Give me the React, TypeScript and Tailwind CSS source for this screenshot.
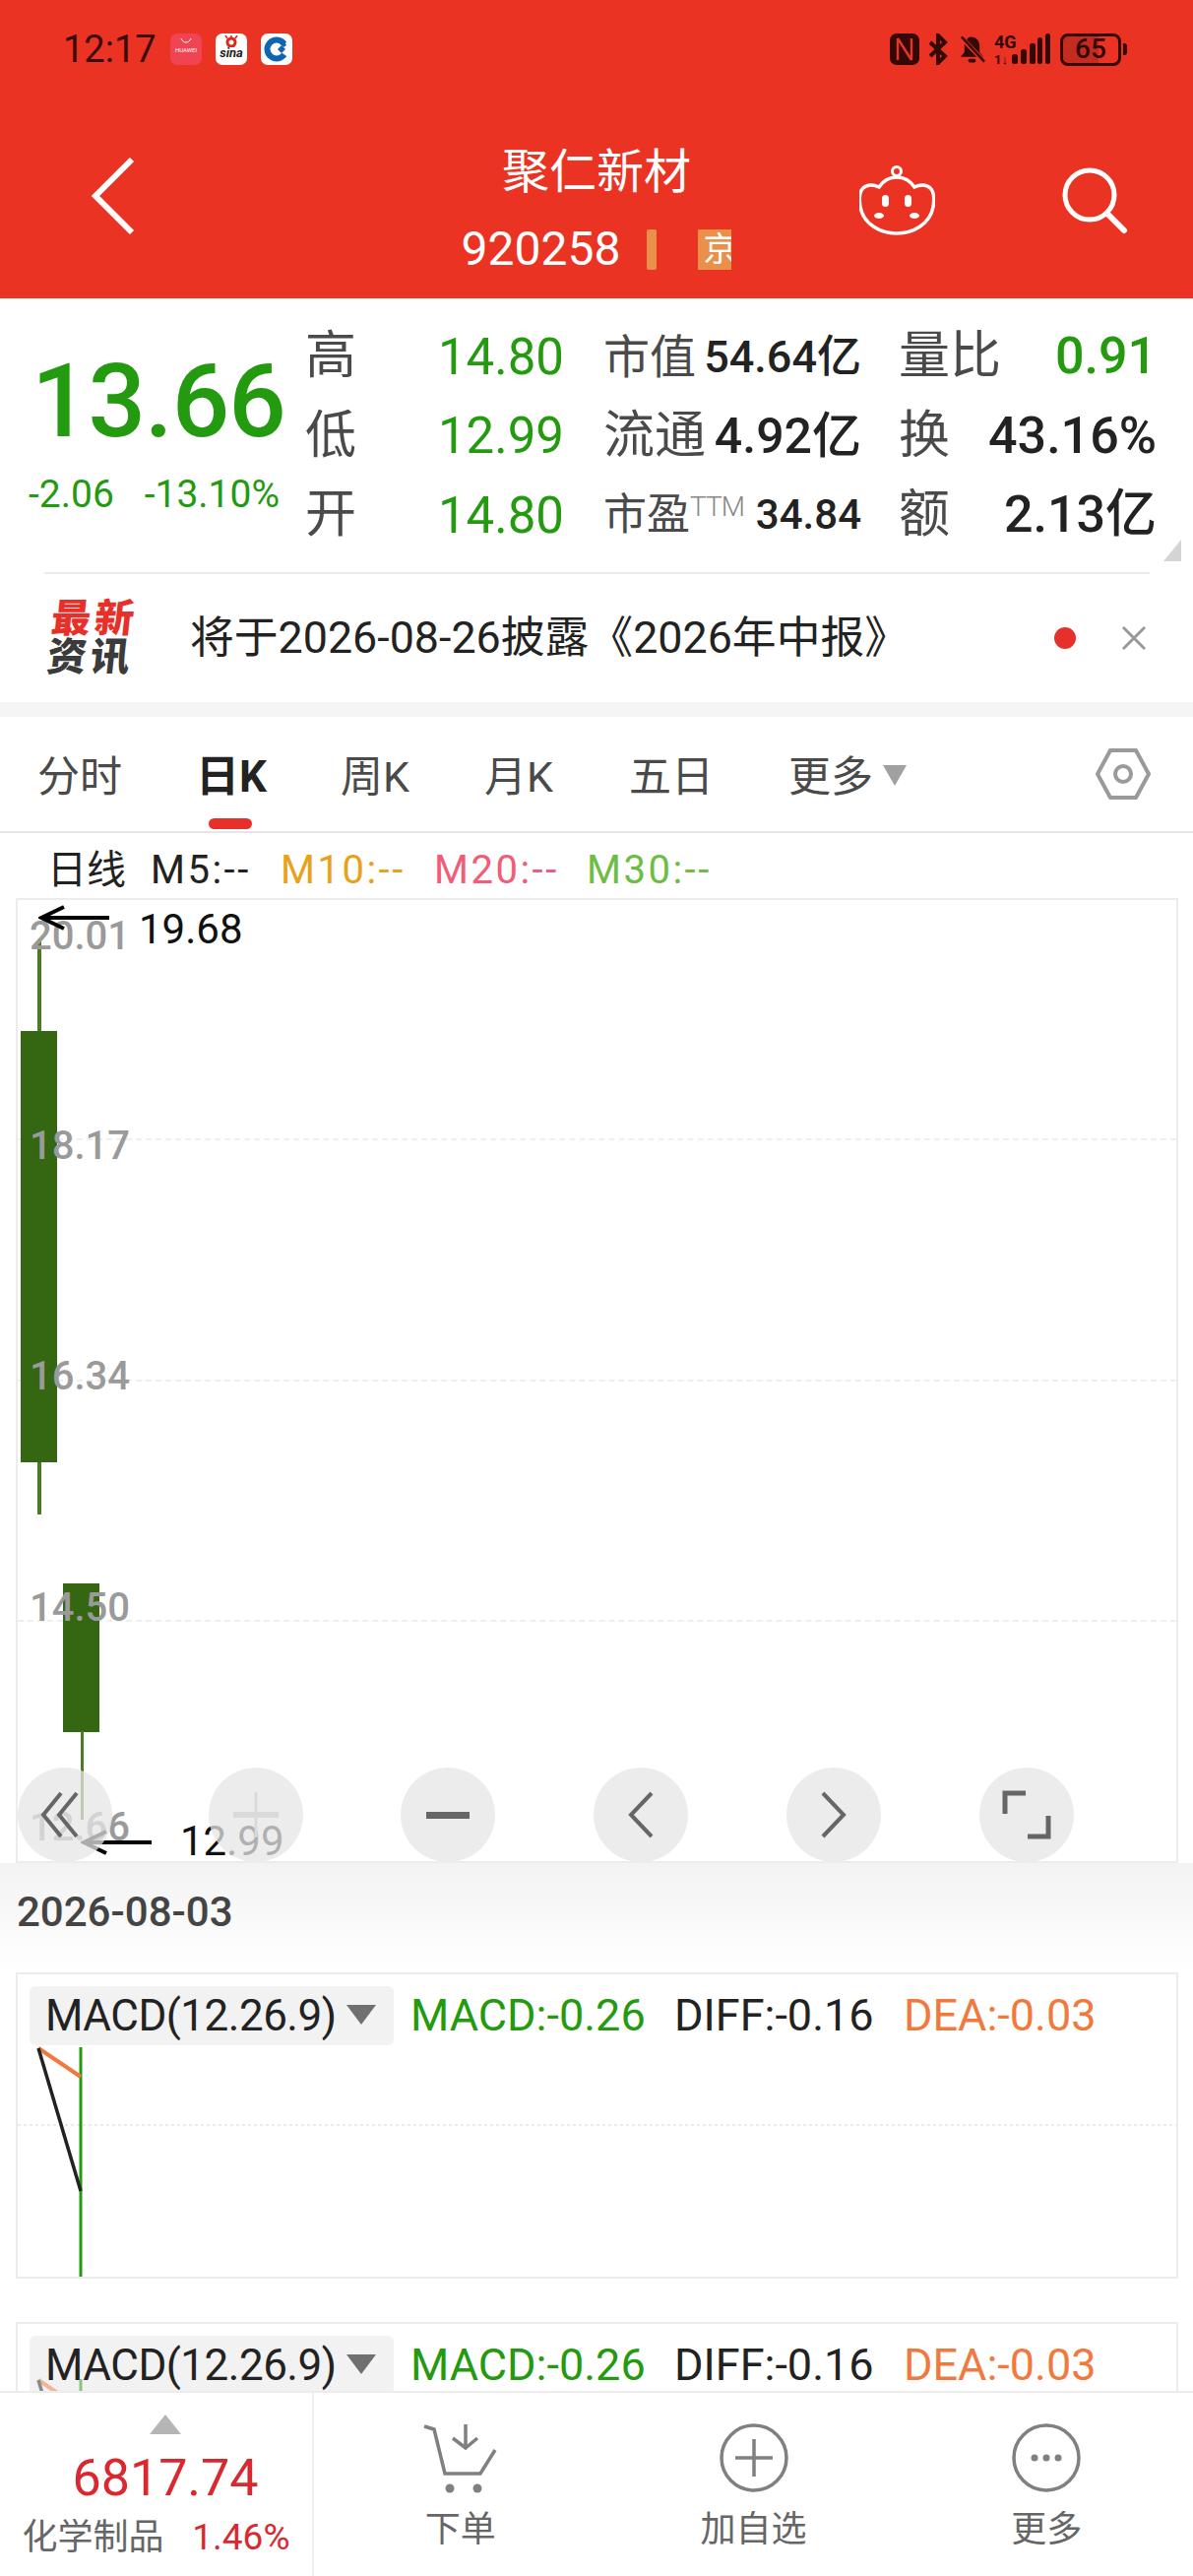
import React from "react";

const CJK = { fontFamily: '"Roboto","Noto Sans CJK SC",sans-serif' };
const DARK = "#340905";

function StatusBar() {
  return (
    <div className="flex h-[100px] items-center justify-between pl-[64px] pr-[67px] pt-[0px]">
      <div className="flex items-center">
        <span className="w-[97px] text-[38px] leading-none text-[#3a0a06]">12:17</span>
        <div className="ml-[12px] flex gap-[14px]">
          <div className="flex h-[32px] w-[32px] flex-col items-center rounded-[7px] bg-[#f04452] pt-[4px]">
            <svg width="14" height="7" viewBox="0 0 14 7"><path d="M2 1c1 3 3 4 5 4s4-1 5-4" fill="none" stroke="#fff" strokeWidth="1" /></svg>
            <span className="mt-[3px] text-[6px] leading-none text-white">HUAWEI</span>
          </div>
          <div className="flex h-[32px] w-[32px] flex-col items-center rounded-[7px] bg-white pt-[2px]">
            <svg width="14" height="12" viewBox="0 0 14 12"><circle cx="7" cy="7" r="4" fill="none" stroke="#d9281e" strokeWidth="3" /><path d="M3 3 1 0M7 2V0M11 3l2-3" stroke="#d9281e" strokeWidth="1.6" /></svg>
            <span className="text-[13px] font-bold italic leading-[12px] text-[#222]">sina</span>
          </div>
          <div className="flex h-[32px] w-[32px] items-center justify-center rounded-[7px] bg-white">
            <svg width="26" height="26" viewBox="0 0 26 26"><circle cx="13" cy="13" r="9.5" fill="none" stroke="#0c66b2" strokeWidth="6" /><path d="M13 13 26 4v18z" fill="#fff" /><path d="M16 7l4-3 3 5-3 2z" fill="#0c66b2" /><path d="M14 13l4-4 4 4-4 4z" fill="#0c66b2" /></svg>
          </div>
        </div>
      </div>
      <div className="flex items-center">
        <svg width="30" height="32" viewBox="0 0 30 32"><rect x="0" y="0" width="30" height="32" rx="7" fill={DARK} /><path d="M8 5v22M8 5l14 22M22 5v22" fill="none" stroke="#ea3323" strokeWidth="2.4" /></svg>
        <svg width="20" height="32" viewBox="0 0 20 32" className="ml-[9px]"><path d="M2 9l15 14-7 7V2l7 7L2 23" fill="none" stroke={DARK} strokeWidth="4" /></svg>
        <svg width="29" height="32" viewBox="0 0 30 32" className="ml-[10px]"><path d="M14 3c6 0 9 5 9 10v6l4 5H3l4-5v-6c0-5 3-10 7-10z" fill={DARK} /><rect x="11" y="26" width="8" height="4" rx="2" fill={DARK} /><path d="M3 3l25 26" stroke="#ea3323" strokeWidth="5" /><path d="M4 3l24 26" stroke={DARK} strokeWidth="2.5" /></svg>
        <svg width="58" height="32" viewBox="0 0 58 32" className="ml-[8px] overflow-visible">
          <text x="0" y="15" fontSize="18" fontWeight="700" fill={DARK} fontFamily="Roboto">4G</text>
          <text x="0" y="31" fontSize="13" fontWeight="700" fill={DARK} fontFamily="Roboto">1↓</text>
          <rect x="18" y="21" width="6" height="10" rx="2.5" fill={DARK} /><rect x="27" y="16" width="6" height="15" rx="2.5" fill={DARK} /><rect x="36" y="10" width="6" height="21" rx="2.5" fill={DARK} /><rect x="52" y="0" width="5" height="31" rx="2.5" fill={DARK} /><rect x="44" y="4" width="5" height="27" rx="2.5" fill={DARK} />
        </svg>
        <div className="ml-[9px] flex h-[33px] w-[62px] items-center justify-center overflow-hidden rounded-[8px] border-[3px] border-[#340905] bg-[linear-gradient(90deg,#c52c20_0_65%,transparent_65%)] text-[28px] font-medium leading-none text-[#340905]">65</div>
        <div className="ml-[2px] h-[12px] w-[4px] rounded-r-[3px] bg-[#340905]"></div>
      </div>
    </div>
  );
}

function NavBar() {
  return (
    <div className="grid h-[203px] grid-cols-[1fr_auto_1fr] items-start pt-[48px]">
      <svg width="46" height="80" viewBox="0 0 46 80" className="ml-[92px] mt-[11px]"><path d="M42 3 5 40l37 37" fill="none" stroke="#fff" strokeWidth="6" /></svg>
      <div className="flex flex-col items-center">
        <div className="text-[48px] font-normal leading-[54px] text-white" style={CJK}>聚仁新材</div>
        <div className="mt-[24px] flex items-center">
          <span className="text-[48px] leading-[54px] text-white">920258</span>
          <span className="ml-[27px] h-[41px] w-[10px] rounded-[2px] bg-[#e9914a]"></span>
          <span className="ml-[42px] flex h-[41px] w-[34px] items-center justify-start overflow-hidden bg-[#e9914a] pl-[5px] text-[34px] leading-none text-white" style={CJK}>京</span>
        </div>
      </div>
      <div className="flex items-start justify-end pr-[65px]">
        <svg width="77" height="71" viewBox="0 0 77 71" fill="none" stroke="#fff" strokeWidth="3.5" className="mt-[20px]">
          <circle cx="38" cy="6" r="4.5" strokeWidth="3" />
          <path d="M38 12C30 12 24 16 20 22 14 19 7 19 3 24 0 28 0 36 1 42 4 60 22 69 38 69 54 69 72 60 75 42 76 36 76 28 73 24 69 19 62 19 56 22 52 16 46 12 38 12Z" />
          <rect x="23" y="30" width="7" height="12" rx="3.5" fill="#fff" stroke="none" />
          <rect x="46" y="30" width="7" height="12" rx="3.5" fill="#fff" stroke="none" />
          <ellipse cx="20" cy="51" rx="5" ry="3" fill="#fff" stroke="none" />
          <ellipse cx="56" cy="51" rx="5" ry="3" fill="#fff" stroke="none" />
        </svg>
        <svg width="68" height="68" viewBox="0 0 68 68" fill="none" stroke="#fff" className="ml-[129px] mt-[22px]"><circle cx="28" cy="28" r="25" strokeWidth="5" /><path d="M46 47l17 17" strokeWidth="6" strokeLinecap="round" /></svg>
      </div>
    </div>
  );
}

function Metric({ label, value, green, labelClass, valueClass, w }: { label: React.ReactNode; value: string; green?: boolean; labelClass?: string; valueClass?: string; w: string }) {
  return (
    <div className={`flex items-center justify-between ${w}`}>
      <span className={`leading-none text-[#4a4a4a] ${labelClass ?? "text-[52px]"}`} style={CJK}>{label}</span>
      <span className={`leading-none ${green ? "text-[#249a10]" : "text-[#222]"} ${valueClass ?? "text-[51px]"}`} style={CJK}>{value}</span>
    </div>
  );
}

function Quote() {
  const rows = [
    [
      { label: "高", value: "14.80", green: true },
      { label: "市值", value: "54.64亿", labelClass: "text-[47px]", valueClass: "text-[45px] font-medium" },
      { label: "量比", value: "0.91", green: true, valueClass: "text-[52px] font-medium" },
    ],
    [
      { label: "低", value: "12.99", green: true },
      { label: "流通", value: "4.92亿", labelClass: "text-[52px]", valueClass: "text-[50px] font-medium" },
      { label: "换", value: "43.16%", valueClass: "text-[52px] font-medium" },
    ],
    [
      { label: "开", value: "14.80", green: true },
      { label: <span className="flex items-start">市盈<span className="text-[28px] font-light leading-[28px] tracking-[-1px] text-[#888]">TTM</span></span>, value: "34.84", labelClass: "text-[44px]", valueClass: "text-[42px] font-medium" },
      { label: "额", value: "2.13亿", valueClass: "text-[52px] font-medium" },
    ],
  ];
  return (
    <div className="relative flex h-[278px] bg-white pl-[32px] pt-[19px]">
      <div className="flex w-[278px] flex-col">
        <div className="mt-[30px] text-[103px] font-medium leading-[112px] tracking-[-1px] text-[#249a10]">13.66</div>
        <div className="-ml-[3px] mt-[18px] flex w-[255px] justify-between text-[39px] leading-[40px] text-[#249a10]"><span>-2.06</span><span>-13.10%</span></div>
      </div>
      <div className="flex flex-col">
        {rows.map((r, i) => (
          <div key={i} className="flex h-[80.5px] items-center">
            <Metric {...r[0]} w="w-[263px]" />
            <div className="ml-[40px]"><Metric {...r[1]} w="w-[262px]" /></div>
            <div className="ml-[38px]"><Metric {...r[2]} w="w-[262px]" /></div>
          </div>
        ))}
      </div>
      <svg width="18" height="22" viewBox="0 0 18 22" className="absolute bottom-[11px] left-[1182px]"><path d="M18 0v22H0z" fill="#d4d4d4" /></svg>
    </div>
  );
}

function News() {
  return (
    <div className="px-[45px]">
      <div className="h-[2px] w-[1123px] bg-[#ececec]"></div>
      <div className="flex h-[130px] items-center">
        <div className="flex w-[90px] -skew-x-6 flex-col pl-[5px] font-black leading-[39px]" style={CJK}>
          <span className="whitespace-nowrap text-[40px] tracking-[4px] text-[#e8302a]">最新</span>
          <span className="whitespace-nowrap text-[40px] tracking-[4px] text-[#3b3b3b]">资讯</span>
        </div>
        <span className="ml-[58px] text-[44.8px] leading-none text-[#222]" style={CJK}>将于2026-08-26披露《2026年中报》</span>
        <span className="ml-auto h-[22px] w-[22px] rounded-full bg-[#e8302a]"></span>
        <svg width="26" height="26" viewBox="0 0 26 26" className="ml-[46px] mr-[2px]"><path d="M2 2l22 22M24 2 2 24" stroke="#999" strokeWidth="3" /></svg>
      </div>
    </div>
  );
}

function Tabs() {
  return (
    <div className="relative flex h-[118px] items-center border-b-2 border-[#e6e6e6] pt-[6px] text-[43px] leading-none text-[#4a4a4a]" style={CJK}>
      <span className="w-[199px] pl-[38px]">分时</span>
      <span className="relative w-[147px] text-[44px] font-bold text-[#222]">日K<span className="absolute left-[13px] top-[64px] h-[11px] w-[44px] rounded-full bg-[#e8302a]"></span></span>
      <span className="w-[146px]">周K</span>
      <span className="w-[147px]">月K</span>
      <span className="w-[162px]">五日</span>
      <span className="flex items-center">更多<svg width="24" height="21" viewBox="0 0 24 21" className="-mt-[4px] ml-[10px]"><path d="M0 0h24L12 21z" fill="#a0a0a0" /></svg></span>
      <svg width="56" height="52" viewBox="0 0 56 52" className="-mt-[6px] ml-auto mr-[43px]" fill="none" stroke="#9a9a9a" strokeWidth="4"><path d="M15 2h26l13 24-13 24H15L2 26z" strokeLinejoin="round" /><circle cx="28" cy="26" r="8" /></svg>
    </div>
  );
}

function Legend() {
  return (
    <div className="flex h-[66px] items-center pl-[48px] pt-[10px] text-[40px] leading-none" style={CJK}>
      <span className="w-[105px] text-[#222]">日线</span>
      <span className="w-[132px] tracking-[2.5px] text-[#222]">M5:--</span>
      <span className="w-[156px] tracking-[2.5px] text-[#e8a11a]">M10:--</span>
      <span className="w-[155px] tracking-[2.5px] text-[#ef5d78]">M20:--</span>
      <span className="tracking-[2.5px] text-[#6dbd45]">M30:--</span>
    </div>
  );
}

const ArrowLeft = ({ className }: { className: string }) => (
  <svg width="72" height="26" viewBox="0 0 72 26" className={className}><path d="M72 13H3M26 2 3 13l23 11" fill="none" stroke="#000" strokeWidth="4" /></svg>
);

function Circle({ cx, children }: { cx: string; children: React.ReactNode }) {
  return <div className={`absolute top-[881px] flex h-[96px] w-[96px] items-center justify-center rounded-full bg-[#e6e6e6]/75 ${cx}`}>{children}</div>;
}

function Chart() {
  const lines = ["top-[242px]", "top-[487px]", "top-[731px]"];
  const labels: [string, string][] = [["20.01", "top-[17px]"], ["18.17", "top-[230px]"], ["16.34", "top-[464px]"], ["14.50", "top-[699px]"], ["12.66", "top-[922px]"]];
  return (
    <div className="relative mx-[16px] h-[980px] w-[1181px] overflow-hidden border-2 border-[#ececec] bg-white">
      {lines.map((l) => <div key={l} className={`absolute left-0 right-0 border-t-2 border-dashed border-[#efefef] ${l}`}></div>)}
      <div className="absolute left-[20px] top-[40px] h-[584px] w-[4px] bg-[#4c7a25]"></div>
      <div className="absolute left-[3px] top-[133px] h-[438px] w-[37px] bg-[#356612]"></div>
      <div className="absolute left-[46px] top-[694px] h-[151px] w-[37px] bg-[#356612]"></div>
      <div className="absolute left-[64px] top-[844px] h-[90px] w-[3px] bg-[#4c7a25]"></div>
      {labels.map(([t, c]) => <span key={t} className={`absolute left-[12px] text-[40px] font-medium leading-none text-[#9a9a9a] ${c}`}>{t}</span>)}
      <ArrowLeft className="absolute left-[21px] top-[5px]" />
      <span className="absolute left-[123px] top-[9px] text-[42px] leading-none text-[#111]">19.68</span>
      <ArrowLeft className="absolute left-[64px] top-[944px]" />
      <span className="absolute left-[165px] top-[935px] text-[42px] leading-none text-[#111]">12.99</span>
      <Circle cx="left-[0px]">
        <svg width="46" height="48" viewBox="0 0 46 48" fill="none" stroke="#666" strokeWidth="4" className="-ml-[6px]"><path d="M22 2 4 24l18 22M38 2 20 24l18 22" /></svg>
      </Circle>
      <Circle cx="left-[194px]">
        <svg width="46" height="46" viewBox="0 0 46 46" fill="none" stroke="#dadada"><path d="M23 0v46" strokeWidth="3" /><path d="M0 23h46" strokeWidth="6" /></svg>
      </Circle>
      <Circle cx="left-[389px]"><div className="h-[7px] w-[44px] bg-[#666]"></div></Circle>
      <Circle cx="left-[585px]">
        <svg width="26" height="48" viewBox="0 0 26 48" fill="none" stroke="#666" strokeWidth="4"><path d="M24 2 3 24l21 22" /></svg>
      </Circle>
      <Circle cx="left-[781px]">
        <svg width="26" height="48" viewBox="0 0 26 48" fill="none" stroke="#666" strokeWidth="4"><path d="M2 2l21 22L2 46" /></svg>
      </Circle>
      <Circle cx="left-[977px]">
        <svg width="50" height="50" viewBox="0 0 50 50" fill="none" stroke="#666" strokeWidth="5"><path d="M3 24V3h21M47 26v21H26" /></svg>
      </Circle>
    </div>
  );
}

function Macd({ second }: { second?: boolean }) {
  return (
    <div className="relative mx-[16px] h-[311px] w-[1181px] border-2 border-[#ececec] bg-white">
      <div className="absolute left-[12px] top-[12px] flex h-[60px] w-[370px] items-center rounded-[6px] bg-[#f2f2f2] pl-[16px] text-[44px] leading-none tracking-[-0.5px] text-[#222]">
        MACD(12.26.9)
        <svg width="30" height="20" viewBox="0 0 30 20" className="absolute left-[322px] top-[19px]"><path d="M0 0h30L15 20z" fill="#707070" /></svg>
      </div>
      <div className="absolute left-[399px] top-[19px] flex whitespace-nowrap text-[45px] leading-none">
        <span className="w-[268px] text-[#249a10]">MACD:-0.26</span>
        <span className="w-[233px] text-[#222]">DIFF:-0.16</span>
        <span className="text-[#f07a3e]">DEA:-0.03</span>
      </div>
      <svg className={`absolute left-0 ${second ? "-top-[18px] opacity-50" : "top-0"}`} width="1177" height="307" viewBox="0 0 1177 307">
        <path d="M0 153H1177" stroke="#ececec" strokeWidth="2" strokeDasharray="3 3" />
        <path d="M64 74V307" stroke="#249a10" strokeWidth="3" />
        <path d="M21 75 64 104" stroke="#f07a3e" strokeWidth="4" />
        <path d="M21 75 64 220" stroke="#222" strokeWidth="3.5" />
      </svg>
    </div>
  );
}

function Action({ icon, label }: { icon: React.ReactNode; label: string }) {
  return (
    <div className="flex flex-1 flex-col items-center pt-[30px]">
      <div className="flex h-[72px] items-center">{icon}</div>
      <span className="mt-[19px] text-[36px] leading-none text-[#666]">{label}</span>
    </div>
  );
}

function Footer() {
  return (
    <div className="absolute bottom-0 left-0 flex h-[188px] w-[1212px] border-t-2 border-[#ececec] bg-white" style={CJK}>
      <div className="flex w-[319px] shrink-0 flex-col items-center border-r-2 border-[#f0f0f0] pt-[22px]">
        <svg width="32" height="20" viewBox="0 0 32 20" className="ml-[19px]"><path d="M16 0l16 20H0z" fill="#b5b5b5" /></svg>
        <span className="ml-[19px] mt-[19px] text-[52px] leading-none text-[#d9282f]">6817.74</span>
        <div className="mt-[15px] flex w-[272px] items-center justify-between text-[36px] leading-none">
          <span className="text-[#666]">化学制品</span><span className="text-[37px] text-[#d9282f]">1.46%</span>
        </div>
      </div>
      <Action
        label="下单"
        icon={
          <svg width="80" height="72" viewBox="0 0 80 72" fill="none" stroke="#808080" strokeWidth="3.5">
            <path d="M3 4 13 7l11 45h36l15-24" /><path d="M45 2v24M32 16l13 10 12-10" /><circle cx="29" cy="67" r="4.5" fill="#808080" stroke="none" /><circle cx="57" cy="67" r="4.5" fill="#808080" stroke="none" />
          </svg>
        }
      />
      <Action
        label="加自选"
        icon={<svg width="70" height="70" viewBox="0 0 70 70" fill="none" stroke="#808080" strokeWidth="3.5"><circle cx="35" cy="35" r="33" /><path d="M35 16v38M16 35h38" /></svg>}
      />
      <Action
        label="更多"
        icon={<svg width="70" height="70" viewBox="0 0 70 70" fill="none" stroke="#808080" strokeWidth="3.5"><circle cx="35" cy="35" r="33" /><circle cx="23" cy="35" r="3.5" fill="#808080" stroke="none" /><circle cx="35" cy="35" r="3.5" fill="#808080" stroke="none" /><circle cx="47" cy="35" r="3.5" fill="#808080" stroke="none" /></svg>}
      />
    </div>
  );
}

export default function App() {
  return (
    <div className="relative h-[2616px] w-[1212px] overflow-hidden bg-white" style={{ fontFamily: '"Roboto","Noto Sans CJK SC",sans-serif' }}>
      <div className="h-[303px] bg-[#ea3323]">
        <StatusBar />
        <NavBar />
      </div>
      <Quote />
      <News />
      <div className="h-[15px] bg-[#f5f5f5]"></div>
      <Tabs />
      <Legend />
      <Chart />
      <div className="flex h-[111px] items-center bg-[linear-gradient(180deg,#f3f3f3,#ffffff)] pb-[12px] pl-[17px] text-[42px] font-medium leading-none text-[#444]">2026-08-03</div>
      <Macd />
      <div className="h-[44px]"></div>
      <Macd second />
      <Footer />
    </div>
  );
}
